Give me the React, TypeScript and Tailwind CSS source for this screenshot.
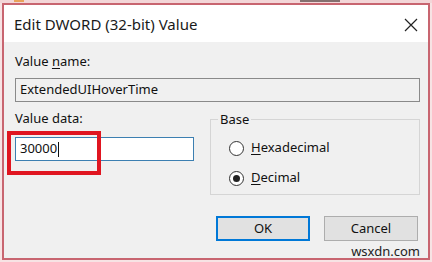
import React from 'react';

const font = { fontFamily: '"Noto Sans", "Open Sans", sans-serif' };

function Radio({ checked, label, accel }: { checked?: boolean; label: string; accel: string }) {
    return (
        <div className="flex items-center gap-[7px] h-[20px]">
            <div className="w-[15px] h-[15px] rounded-full border border-[#333] bg-white flex items-center justify-center">
                {checked && <div className="w-[7px] h-[7px] rounded-full bg-[#222]" />}
            </div>
            <span className="text-[13px] text-[#111]">
                <span className="underline underline-offset-2">{accel}</span>
                {label}
            </span>
        </div>
    );
}

export default function App() {
    return (
        <div className="w-[432px] h-[262px] bg-[#f7e3e4] overflow-hidden relative" style={font}>
            <div className="h-[3px] bg-[#f3d6d8] relative">
                <div className="absolute left-[300px] top-0 w-[40px] h-[2px] bg-[#3a2a2a]/60" />
                <div className="absolute left-[14px] top-0 w-[10px] h-[2px] bg-[#e9a25a]" />
            </div>
            <div className="ml-[2px] w-[428px] h-[257px] border-2 border-[#c86570] bg-[#f0f0f0] flex flex-col">
                <div className="h-[37px] bg-white flex items-center justify-between pl-[10px] pr-[10px] shrink-0">
                    <span className="text-[15px] text-[#1a1a1a] leading-none mt-[2px]">Edit DWORD (32-bit) Value</span>
                    <svg width="14" height="14" viewBox="0 0 14 14" className="mt-[2px]">
                        <path d="M1 1 L13 13 M13 1 L1 13" stroke="#222" strokeWidth="1.2" />
                    </svg>
                </div>
                <div className="flex-1 pl-[11px] pr-[8px] relative">
                    <div className="mt-[10px] text-[13px] leading-[18px] text-[#111]">
                        Value <span className="underline underline-offset-2">n</span>ame:
                    </div>
                    <div className="mt-[8px] h-[24px] border border-[#8a8a8a] bg-[#f0f0f0] flex items-center px-[4px] text-[13px] text-[#111]">
                        ExtendedUIHoverTime
                    </div>
                    <div className="flex mt-[7px]">
                        <div className="w-[179px]">
                            <div className="text-[13px] leading-[18px] text-[#111]">Value data:</div>
                            <div className="mt-[10px] h-[24px] border border-[#3c7fb1] bg-white flex items-center px-[4px] text-[13px] text-[#111]">
                                30000<span className="inline-block w-px h-[15px] bg-[#111] ml-px" />
                            </div>
                        </div>
                        <div className="ml-[16px] flex-1 relative pt-[10px]">
                            <div className="h-[76px] border border-[#d5d5d5] pl-[18px] pt-[18px] flex flex-col gap-[10px]">
                                <Radio accel="H" label="exadecimal" />
                                <Radio checked accel="D" label="ecimal" />
                            </div>
                            <span className="absolute left-[8px] top-[2px] px-[2px] bg-[#f0f0f0] text-[13px] leading-[16px] text-[#111]">Base</span>
                        </div>
                    </div>
                    <div className="flex justify-end gap-[14px] mt-[21px] mr-[2px]">
                        <button className="w-[94px] h-[25px] border-2 border-[#0078d7] bg-[#e1e1e1] text-[13px] text-[#111]">OK</button>
                        <button className="w-[94px] h-[25px] border border-[#adadad] bg-[#e1e1e1] text-[13px] text-[#111]">Cancel</button>
                    </div>
                    <div className="flex justify-end mt-[3px] text-[13px] leading-[14px] text-[#222]">wsxdn.com</div>
                    <div className="absolute left-[3px] top-[89px] w-[94px] h-[44px] border-[4px] border-[#e01520]" />
                </div>
            </div>
        </div>
    );
}
